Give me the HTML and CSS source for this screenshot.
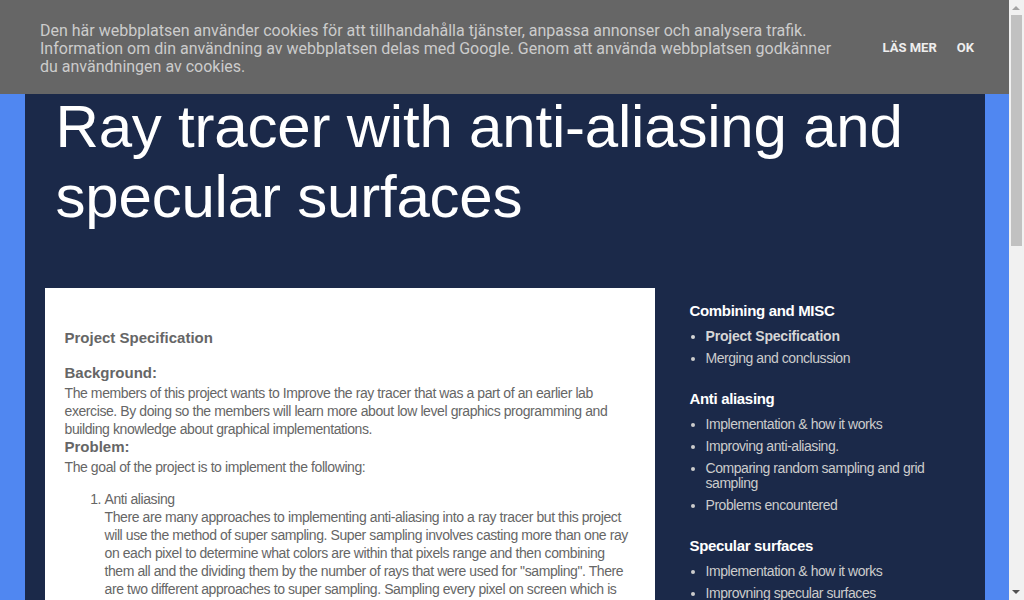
FILE: index.html
```html
<!DOCTYPE html>
<html lang="en">
<head>
<meta charset="utf-8">
<title>Ray tracer with anti-aliasing and specular surfaces</title>
<link rel="stylesheet" href="styles.css">
</head>
<body>
<div class="cookie-bar">
  <div class="cookie-text">Den här webbplatsen använder cookies för att tillhandahålla tjänster, anpassa annonser och analysera trafik. Information om din användning av webbplatsen delas med Google. Genom att använda webbplatsen godkänner du användningen av cookies.</div>
  <div class="cookie-actions">
    <a class="cookie-btn" href="#">Läs mer</a>
    <a class="cookie-btn" href="#">OK</a>
  </div>
</div>
<div class="scrollbar" aria-hidden="true">
  <div class="sb-arrow sb-up"></div>
  <div class="sb-thumb"></div>
  <div class="sb-arrow sb-down"></div>
</div>
<div class="viewport">
<div class="page">
  <header class="header">
    <h1 class="title">Ray tracer with anti-aliasing and specular surfaces</h1>
  </header>
  <div class="content">
    <main class="card">
      <h3 class="post-title">Project Specification</h3>
      <div class="post-body">
        <h4 class="sub">Background:</h4>
        <p>The members of this project wants to Improve the ray tracer that was a part of an earlier lab exercise. By doing so the members will learn more about low level graphics programming and building knowledge about graphical implementations.</p>
        <h4 class="sub">Problem:</h4>
        <p>The goal of the project is to implement the following:</p>
        <ol class="goals">
          <li>Anti aliasing<br>There are many approaches to implementing anti-aliasing into a ray tracer but this project will use the method of super sampling. Super sampling involves casting more than one ray on each pixel to determine what colors are within that pixels range and then combining them all and the dividing them by the number of rays that were used for "sampling". There are two different approaches to super sampling. Sampling every pixel on screen which is known as full scene anti-aliasing, or only sampling the pixels along the edges of objects, which is a more efficient approach.</li>
          <li>Specular surfaces<br>Specular surfaces reflect light in a mirror-like way. To implement this, a reflected ray is cast from the intersection point of each ray that hits a specular surface, and the color found by the reflected ray is combined with the color of the surface itself. The amount of reflection decides how much the surface looks like a mirror.</li>
        </ol>
        <h4 class="sub">Method:</h4>
        <p>The project will be built on top of the ray tracer from the earlier lab exercise. Each feature will be implemented separately and then merged together at the end of the project. The results will be compared with images rendered without the new features to see the difference in quality and performance.</p>
        <h4 class="sub">Time plan:</h4>
        <p>The first week will be spent on researching the different approaches. The second week will be spent on implementing the features and the last week will be spent on merging the code, fixing problems and writing the report.</p>
      </div>
    </main>
    <aside class="sidebar">
      <section class="widget">
        <h2 class="widget-title">Combining and MISC</h2>
        <ul class="widget-list">
          <li class="current">Project Specification</li>
          <li>Merging and conclussion</li>
        </ul>
      </section>
      <section class="widget">
        <h2 class="widget-title">Anti aliasing</h2>
        <ul class="widget-list">
          <li>Implementation &amp; how it works</li>
          <li>Improving anti-aliasing.</li>
          <li>Comparing random sampling and grid sampling</li>
          <li>Problems encountered</li>
        </ul>
      </section>
      <section class="widget">
        <h2 class="widget-title">Specular surfaces</h2>
        <ul class="widget-list">
          <li>Implementation &amp; how it works</li>
          <li>Improvning specular surfaces</li>
          <li>Problems encountered</li>
        </ul>
      </section>
    </aside>
  </div>
</div>
</div>
</body>
</html>
```
FILE: styles.css
```css
body {
  margin: 0;
  background: #5087f1;
  font-family: "Liberation Sans", Arial, sans-serif;
}
.viewport {
  margin-right: 15px;
}
.cookie-bar {
  position: fixed;
  top: 0;
  left: 0;
  right: 15px;
  height: 94px;
  box-sizing: border-box;
  background: #666666;
  display: flex;
  align-items: center;
  padding: 0 35px 0 40px;
  z-index: 10;
}
.cookie-text {
  font-family: Roboto, "Liberation Sans", sans-serif;
  font-size: 16px;
  line-height: 18px;
  color: #cccccc;
  width: 800px;
  padding-top: 4px;
}
.cookie-actions {
  display: flex;
  gap: 20px;
  margin-left: auto;
}
.cookie-btn {
  font-family: Roboto, "Liberation Sans", sans-serif;
  font-weight: bold;
  font-size: 13px;
  text-transform: uppercase;
  color: #eeeeee;
  text-decoration: none;
}
.scrollbar {
  position: fixed;
  top: 0;
  right: 0;
  width: 15px;
  height: 100%;
  background: #f1f1f1;
  z-index: 20;
}
.sb-arrow {
  position: absolute;
  left: 3px;
  width: 0;
  height: 0;
  border-left: 4px solid transparent;
  border-right: 4px solid transparent;
}
.sb-up {
  top: 6px;
  border-bottom: 4px solid #a3a3a3;
}
.sb-down {
  bottom: 6px;
  border-top: 4px solid #505050;
}
.sb-thumb {
  position: absolute;
  top: 15px;
  left: 2px;
  width: 11px;
  height: 231px;
  background: #c1c1c1;
}
.page {
  width: 960px;
  margin: 0 auto;
  background: #1b2949;
  min-height: 1400px;
}
.header {
  padding: 92px 31px 56px;
}
.title {
  margin: 0;
  font-weight: normal;
  font-size: 60px;
  line-height: 70px;
  letter-spacing: -0.2px;
  color: #ffffff;
}
.content {
  display: flex;
  align-items: flex-start;
  padding: 0 20px;
  gap: 35px;
}
.card {
  width: 610px;
  flex: none;
  background: #ffffff;
  box-sizing: border-box;
  padding: 41px 20px 30px;
  color: #666666;
}
.post-title {
  margin: 0 0 17px;
  font-size: 15px;
  line-height: 18px;
  font-weight: bold;
  color: #666666;
}
.post-body {
  font-size: 14px;
  line-height: 18px;
  letter-spacing: -0.41px;
}
.sub {
  margin: 0 0 2px;
  font-size: 15px;
  line-height: 18px;
  font-weight: bold;
  letter-spacing: 0;
  color: #666666;
}
.post-body p {
  margin: 0;
}
.goals {
  margin: 14px 0 14px;
  padding-left: 40px;
}
.goals li {
  margin-bottom: 12px;
}
.sidebar {
  width: 250px;
  flex: none;
  padding-top: 14px;
}
.widget {
  margin-bottom: 21px;
}
.widget-title {
  margin: 0 0 5px;
  font-size: 15px;
  line-height: 18px;
  font-weight: bold;
  letter-spacing: -0.33px;
  color: #ffffff;
}
.widget-list {
  margin: 0;
  padding-left: 16px;
  font-size: 14px;
  line-height: 15px;
  letter-spacing: -0.45px;
  color: #cccccc;
}
.widget-list li {
  padding: 3.5px 0;
}
.widget-list li.current {
  font-weight: bold;
  letter-spacing: -0.2px;
  color: #d6d6d6;
}
```
